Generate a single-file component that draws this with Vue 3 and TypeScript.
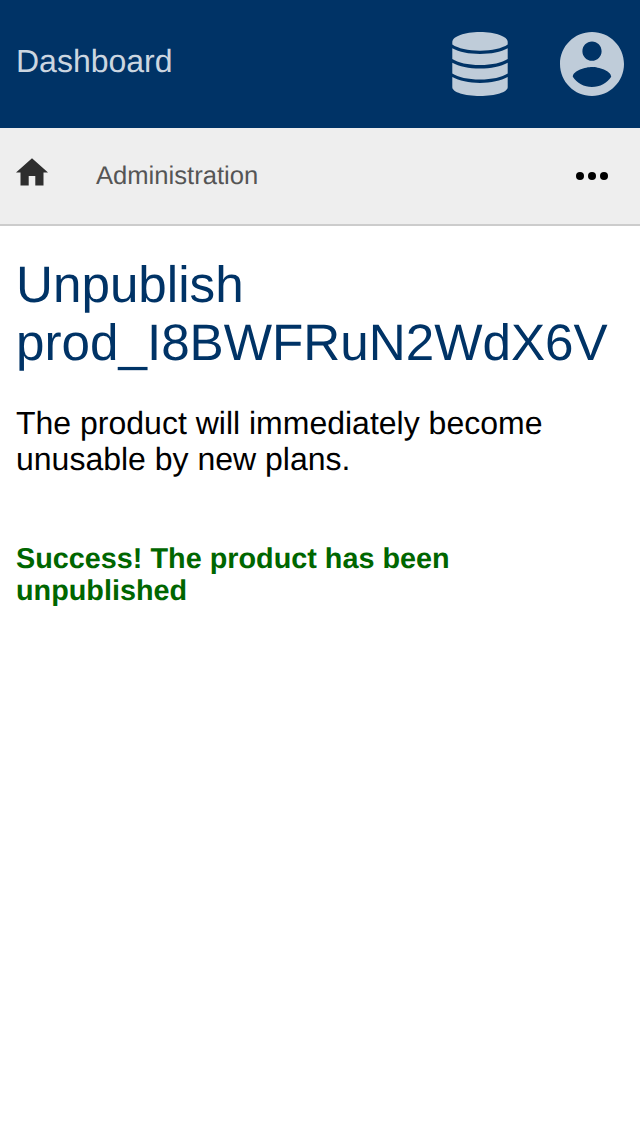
<script setup lang="ts">
const title: string = 'prod_I8BWFRuN2WdX6V'
</script>

<template>
  <div class="page">
    <header class="topbar">
      <span class="brand">Dashboard</span>
      <svg class="database" viewBox="0 0 56 64" aria-hidden="true">
        <path d="M.3 10C.3 4.500 12.500 0 28 0s27.700 4.500 27.700 10v2.600C50 16.500 40 18.800 28 18.800S6 16.500 .3 12.600z" />
        <path d="M.3 16.200C7 20 17 21.900 28 21.900s21-1.900 27.700-5.700V27C50 30.700 40 33 28 33S6 30.700 .3 27z" />
        <path d="M.3 30.700C7 34.500 17 36.500 28 36.500s21-2 27.700-5.800V41.500C50 45.200 40 47.500 28 47.500S6 45.200 .3 41.500z" />
        <path d="M.3 45.100C7 49 17 50.900 28 50.900s21-1.900 27.700-5.800v10.200C55.700 60.200 43.500 64 28 64S.3 60.200 .3 55.300z" />
      </svg>
      <svg class="account" viewBox="2 2 20 20" aria-hidden="true">
        <path d="M12 2C6.480 2 2 6.480 2 12s4.480 10 10 10 10-4.480 10-10S17.520 2 12 2zm0 3c1.660 0 3 1.340 3 3s-1.340 3-3 3-3-1.340-3-3 1.340-3 3-3zm0 14.200c-2.500 0-4.710-1.280-6-3.220.030-1.990 4-3.080 6-3.080 1.990 0 5.970 1.090 6 3.080-1.290 1.940-3.500 3.220-6 3.220z" />
      </svg>
    </header>
    <nav class="navbar">
      <svg class="home" viewBox="0 0 32 28" aria-hidden="true"><path d="M16 .3 32 14.600h-4.500v13h-8.200V18h-6.600v9.600H4.500v-13H0z" /></svg>
      <span class="section">Administration</span>
      <svg class="more" viewBox="0 0 32 8" aria-hidden="true"><circle cx="4" cy="4" r="4" /><circle cx="16" cy="4" r="4" /><circle cx="28" cy="4" r="4" /></svg>
    </nav>
    <main>
      <h1>Unpublish<br />{{ title }}</h1>
      <p class="description">The product will immediately become unusable by new plans.</p>
      <p class="success">Success! The product has been unpublished</p>
    </main>
  </div>
</template>

<style>
body { margin: 0; background: #fff; }
</style>

<style scoped>
.page { min-height: 1136px; font-family: "Liberation Sans", Arial, sans-serif; background: #fff; text-rendering: geometricPrecision; }
.topbar { height: 128px; box-sizing: border-box; padding: 0 16px; display: flex; align-items: center; background: #036; fill: #bfccd9; }
.brand { flex: 1; color: #ccd6e0; font-size: 32px; line-height: 36px; padding-bottom: 6px; }
.database { width: 56px; height: 64px; margin-right: 52px; }
.account { width: 64px; height: 64px; }
.navbar { height: 98px; box-sizing: border-box; padding: 0 32px 0 16px; display: flex; align-items: center; background: #eee; border-bottom: 2px solid #ccc; }
.home { width: 32px; height: 28px; margin: 0 48px 8px 0; fill: #2e2e2e; }
.section { flex: 1; color: #555; font-size: 25.6px; line-height: 30px; }
.more { width: 32px; height: 8px; }
main { padding: 30px 16px 0; }
h1 { margin: 0; color: #036; font-size: 51.2px; font-weight: 400; line-height: 58px; }
.description { margin: 33px 0 0; color: #000; font-size: 32px; line-height: 36px; }
.success { margin: 66px 0 0; color: #060; font-size: 28.8px; line-height: 32px; font-weight: 700; width: 500px; }
</style>
